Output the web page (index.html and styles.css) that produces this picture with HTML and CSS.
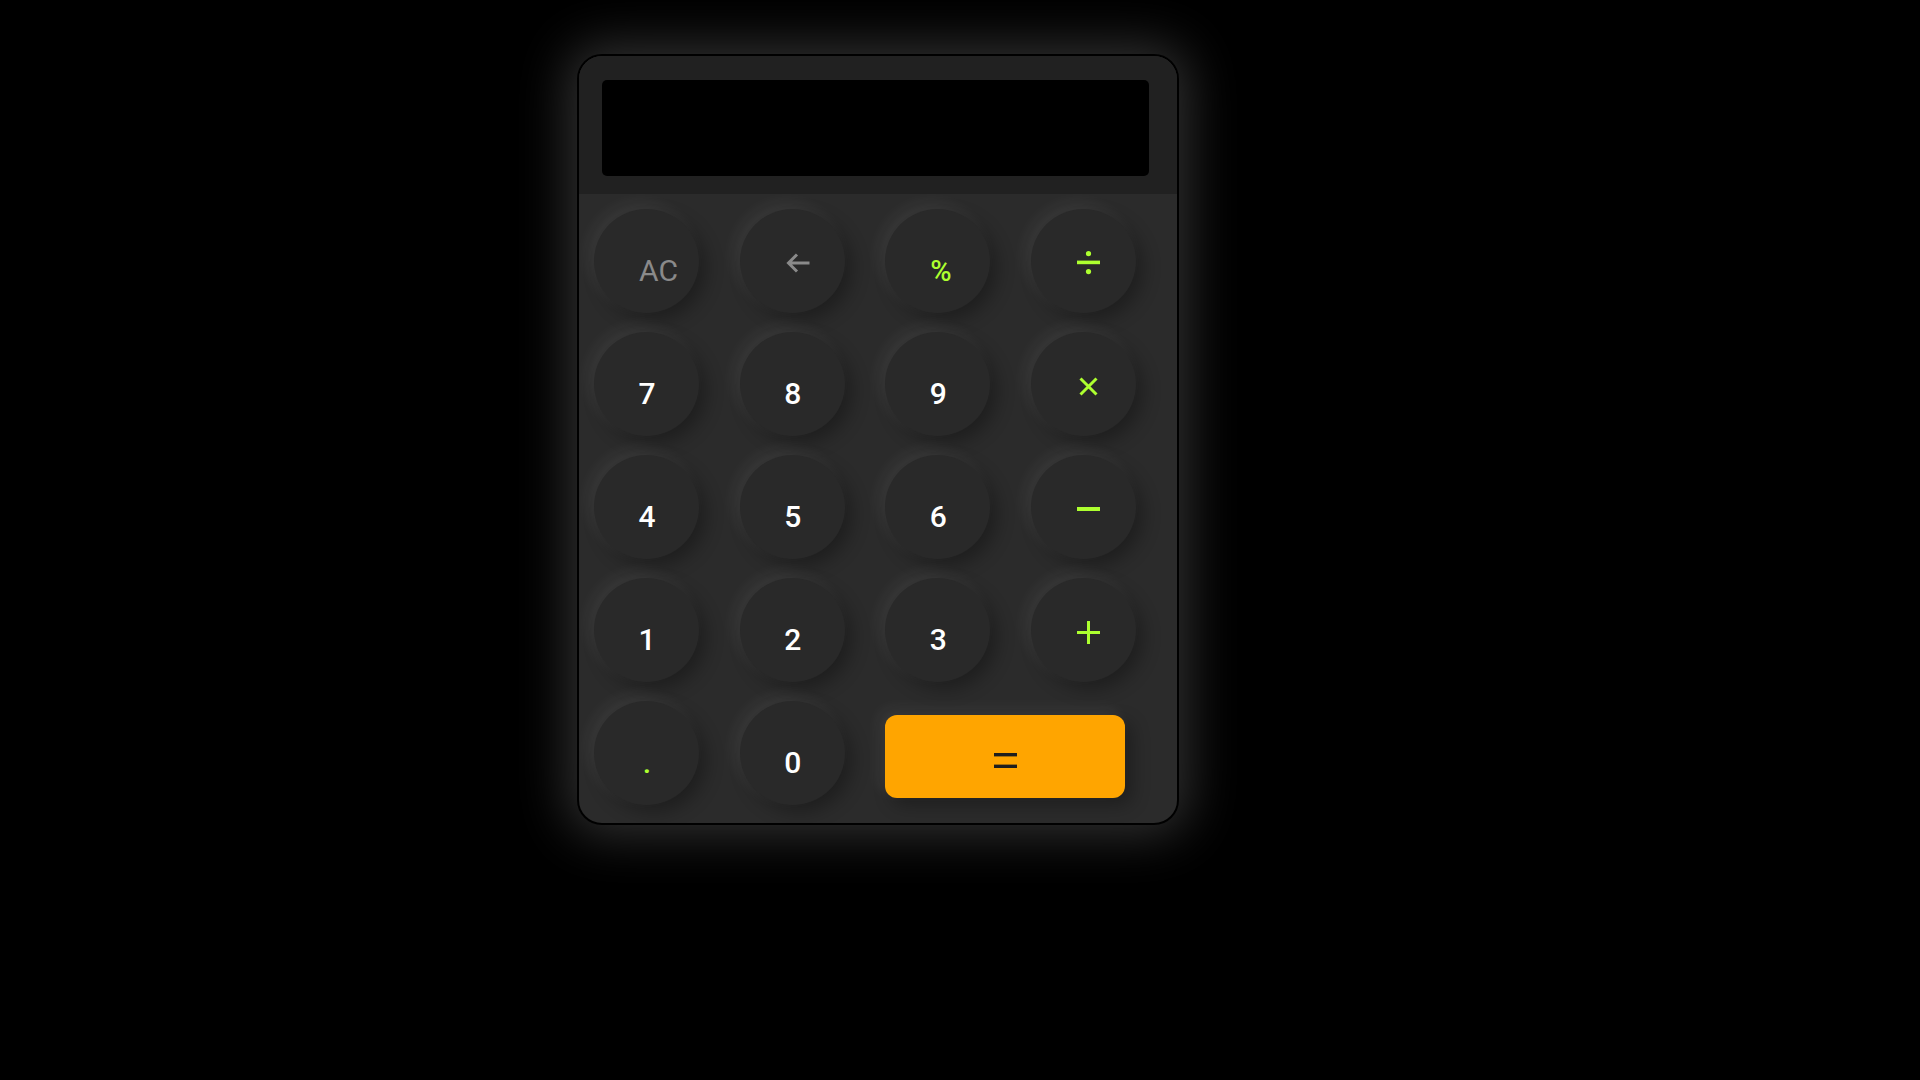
FILE: index.html
```html
<!DOCTYPE html>
<html lang="en">
<head>
<meta charset="utf-8">
<title>Calculator</title>
<link rel="stylesheet" href="styles.css">
</head>
<body>
<div class="page">
  <div class="calc">
    <div class="head">
      <div class="screen"></div>
    </div>
    <div class="pad">
      <button class="key key-ac">AC</button>
      <button class="key key-icon key-gray" aria-label="back">
        <svg width="25" height="22" viewBox="0 0 25 22"><path d="M24.5 11H4M12 2.5L3.5 11L12 19.5" fill="none" stroke="currentColor" stroke-width="3"/></svg>
      </button>
      <button class="key key-pct">%</button>
      <button class="key key-icon key-green" aria-label="divide">
        <svg width="23" height="24" viewBox="0 0 23 24"><rect x="0" y="9.6" width="23" height="3.6" fill="currentColor"/><circle cx="11.5" cy="2.7" r="2.6" fill="currentColor"/><circle cx="11.5" cy="20.6" r="2.6" fill="currentColor"/></svg>
      </button>

      <button class="key key-num">7</button>
      <button class="key key-num">8</button>
      <button class="key key-num">9</button>
      <button class="key key-icon key-green" aria-label="multiply">
        <svg width="19" height="19" viewBox="0 0 19 19"><path d="M1.5 1.5L17.5 17.5M17.5 1.5L1.5 17.5" fill="none" stroke="currentColor" stroke-width="3"/></svg>
      </button>

      <button class="key key-num">4</button>
      <button class="key key-num">5</button>
      <button class="key key-num">6</button>
      <button class="key key-icon key-green" aria-label="minus">
        <svg width="23" height="4" viewBox="0 0 23 4"><rect x="0" y="0" width="23" height="4" fill="currentColor"/></svg>
      </button>

      <button class="key key-num">1</button>
      <button class="key key-num">2</button>
      <button class="key key-num">3</button>
      <button class="key key-icon key-green" aria-label="plus">
        <svg width="23" height="23" viewBox="0 0 23 23"><path d="M0 11.5H23M11.5 0V23" fill="none" stroke="currentColor" stroke-width="3"/></svg>
      </button>

      <button class="key key-num key-dot">.</button>
      <button class="key key-num">0</button>
      <button class="key-eq" aria-label="equals">
        <svg width="23" height="15" viewBox="0 0 23 15"><rect x="0" y="0" width="23" height="3.4" fill="currentColor"/><rect x="0" y="11.6" width="23" height="3.4" fill="currentColor"/></svg>
      </button>
    </div>
  </div>
</div>
</body>
</html>
```

FILE: styles.css
```css
html, body {
  margin: 0;
  background: #000;
  font-family: Roboto, "Liberation Sans", Arial, sans-serif;
}

.page {
  min-height: 1080px;
  box-sizing: border-box;
  padding: 54px 0 0 577px;
}

.calc {
  width: 602px;
  height: 771px;
  box-sizing: border-box;
  border: 2px solid #000;
  border-radius: 25px;
  background: #2b2b2b;
  overflow: hidden;
  box-shadow: 0 0 50px 10px rgba(255, 255, 255, 0.19);
  display: flex;
  flex-direction: column;
}

.head {
  height: 138px;
  box-sizing: border-box;
  padding: 24px 0 0 23px;
  background: #212121;
  flex: none;
}

.screen {
  width: 547px;
  height: 96px;
  background: #000;
  border-radius: 5px;
}

.pad {
  padding: 15px 0 0 15px;
  display: grid;
  grid-template-columns: repeat(4, 105px);
  grid-auto-rows: 104px;
  column-gap: 40.67px;
  row-gap: 19px;
}

.key {
  width: 105px;
  height: 104px;
  border: none;
  margin: 0;
  padding: 0;
  border-radius: 50%;
  background: #292929;
  box-shadow: -6px -6px 16px rgba(255, 255, 255, 0.065), 7px 7px 18px rgba(0, 0, 0, 0.3);
  display: flex;
  align-items: center;
  justify-content: center;
  font-family: inherit;
  font-size: 30px;
  line-height: 1;
  cursor: pointer;
}

.key-num {
  color: #fff;
  font-weight: 500;
  padding: 19px 0 0 1px;
}

.key-dot {
  color: #adff2f;
}

.key-ac {
  color: #8a8a8a;
  font-weight: 400;
  padding: 20px 0 0 24px;
}

.key-pct {
  color: #adff2f;
  font-weight: 500;
  font-size: 29px;
  padding: 20px 0 0 6px;
}

.key-icon {
  padding: 4px 0 0 10px;
}

.key-icon svg {
  display: block;
}

.key-gray {
  color: #8a8a8a;
}

.key-green {
  color: #adff2f;
}

.key-eq {
  grid-column: span 2;
  width: 240px;
  height: 83px;
  margin: 14px 0 0 0;
  padding: 8px 0 0 0;
  border: none;
  border-radius: 12px;
  background: #ffa500;
  color: #1e1e1e;
  box-shadow: -6px -6px 16px rgba(255, 255, 255, 0.065), 7px 7px 18px rgba(0, 0, 0, 0.3);
  display: flex;
  align-items: center;
  justify-content: center;
  cursor: pointer;
}

.key-eq svg {
  display: block;
}
```
